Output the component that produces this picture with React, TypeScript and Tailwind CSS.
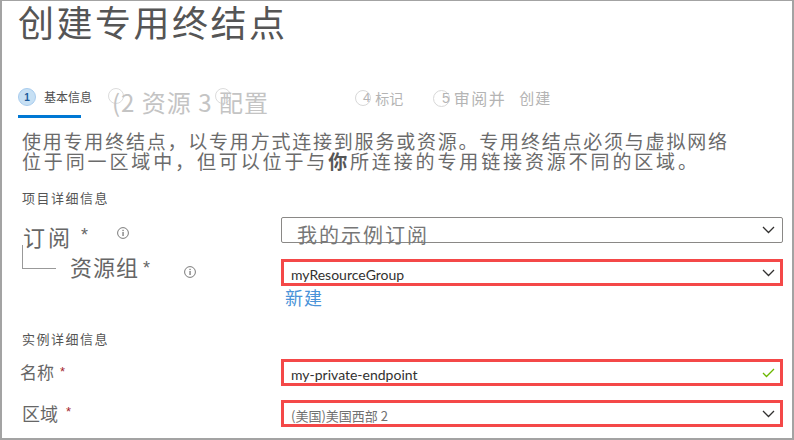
import React from 'react';

const cjk = '[font-family:"Noto_Sans_CJK_SC","Noto_Sans",sans-serif]';

function InfoIcon() {
  return (
    <svg width="12" height="12" viewBox="0 0 12 12" className="shrink-0">
      <circle cx="6" cy="6" r="5.4" fill="none" stroke="#7a7a7a" strokeWidth="1" />
      <rect x="5.4" y="5" width="1.3" height="4" fill="#7a7a7a" />
      <rect x="5.4" y="2.8" width="1.3" height="1.3" fill="#7a7a7a" />
    </svg>
  );
}

function Chevron() {
  return (
    <svg width="13" height="8" viewBox="0 0 13 8" className="shrink-0">
      <polyline points="1,1 6.5,6.5 12,1" fill="none" stroke="#323130" strokeWidth="1.3" />
    </svg>
  );
}

function Check() {
  return (
    <svg width="13" height="10" viewBox="0 0 13 10" className="shrink-0">
      <polyline points="1,5 4.5,8.5 12,1" fill="none" stroke="#6bb700" strokeWidth="1.3" />
    </svg>
  );
}

function RedBox({ children, right }: { children: React.ReactNode; right: React.ReactNode }) {
  return (
    <div className="w-[502px] h-[27px] border-[3px] border-[#f44848] flex items-center pl-[7px] pr-[5px]">
      <div className="flex-1 truncate">{children}</div>
      {right}
    </div>
  );
}

export default function App() {
  return (
    <div className={`w-[794px] h-[440px] bg-white border-l-2 border-r-2 border-t border-b-2 border-[#a3a3a3] overflow-hidden pl-[16px] ${cjk}`}>
      {/* title */}
      <div className="text-[36px] leading-[40px] tracking-[2.5px] text-[#555]">创建专用终结点</div>

      {/* steps */}
      <div className="mt-[46px] h-[31px] flex items-start">
        <div className="w-[90px] shrink-0 flex flex-col">
          <div className="h-[20px] flex items-center">
            <span className="w-[18px] h-[18px] rounded-full bg-[#c7e0f4] border border-[#a8ccee] flex items-center justify-center text-[10px] font-bold text-[#1b5a9a] [font-family:Arial,sans-serif]">1</span>
            <span className="ml-[8px] text-[12px] text-[#505050]">基本信息</span>
          </div>
          <div className="mt-[8px] w-[63px] h-[3px] bg-[#0078d4]" />
        </div>
        <div className="w-[247px] shrink-0 relative mt-[3px]">
          <span className="absolute left-0 top-[-2px] w-[16px] h-[16px] rounded-full border border-[#dcdcdc]" />
          <span className="absolute left-[107px] top-[-2px] w-[16px] h-[16px] rounded-full border border-[#dcdcdc]" />
          <div className="relative pl-[4px] text-[24px] leading-[24px] tracking-[1px] text-[#c4c4c4]">(2 资源 3 配置</div>
        </div>
        <div className="w-[78px] shrink-0 h-[20px] mt-[1px] flex items-center text-[#b4b4b4]">
          <span className="w-[16px] h-[16px] rounded-full border border-[#d8d8d8] shrink-0" />
          <span className="-ml-[8px] text-[13px] [font-family:Arial,sans-serif]">4</span>
          <span className="ml-[5px] text-[14px]">标记</span>
        </div>
        <div className="h-[20px] mt-[1px] flex items-center text-[#b4b4b4]">
          <span className="w-[17px] h-[17px] rounded-full border border-[#d8d8d8] shrink-0" />
          <span className="-ml-[8px] text-[14px] [font-family:Arial,sans-serif]">5</span>
          <span className="ml-[4px] text-[16px] tracking-[1.5px]">审阅并</span>
          <span className="ml-[13px] text-[15px] tracking-[1px]">创建</span>
        </div>
      </div>

      {/* description */}
      <div className="ml-[4px] mt-[13px] text-[19px] leading-[20px] text-[#6b6b6b]">
        <div className="w-[705px] text-justify [text-align-last:justify]">使用专用终结点，以专用方式连接到服务或资源。专用终结点必须与虚拟网络</div>
        <div className="w-[675px] text-justify [text-align-last:justify]">位于同一区域中，但可以位于与<span className="font-bold text-[#555]">你</span>所连接的专用链接资源不同的区域。</div>
      </div>

      <div className="ml-[4px] mt-[17px] text-[13px] leading-[20px] tracking-[1.5px] text-[#555]">项目详细信息</div>

      {/* subscription */}
      <div className="mt-[9px] h-[26px] flex items-start">
        <div className="w-[263px] shrink-0 flex items-start text-[#666]">
          <span className="ml-[5px] mt-[6px] text-[22px] leading-[26px] tracking-[3px]">订阅</span>
          <span className="ml-[8px] mt-[9px] text-[18px] leading-[18px] [font-family:Arial,sans-serif]">*</span>
          <span className="ml-[29px] mt-[10px]"><InfoIcon /></span>
        </div>
        <div className="w-[502px] h-[26px] border border-[#8a8886] rounded-[2px] flex items-center pl-[15px] pr-[7px]">
          <span className="flex-1 relative top-[5px] text-[20px] leading-[26px] tracking-[2px] text-[#777]">我的示例订阅</span>
          <Chevron />
        </div>
      </div>

      {/* resource group */}
      <div className="mt-[16px] flex items-start">
        <div className="w-[263px] shrink-0 flex items-start text-[#666]">
          <div className="ml-[4px] -mt-[14px] w-[34px] h-[24px] shrink-0 border-l border-b border-[#999]" />
          <span className="ml-[14px] -mt-[6px] text-[22px] leading-[26px] tracking-[1px]">资源组</span>
          <span className="ml-[4px] mt-[0px] text-[18px] leading-[18px] [font-family:Arial,sans-serif]">*</span>
          <span className="ml-[34px] mt-[7px]"><InfoIcon /></span>
        </div>
        <div className="flex flex-col">
          <RedBox right={<Chevron />}>
            <span className="text-[14px] text-[#323130] [font-family:Lato,sans-serif]">myResourceGroup</span>
          </RedBox>
          <span className="ml-[4px] mt-[1px] text-[18px] leading-[20px] tracking-[1px] text-[#4a93d8]">新建</span>
        </div>
      </div>

      <div className="ml-[4px] mt-[22px] text-[13px] leading-[20px] tracking-[1.5px] text-[#555]">实例详细信息</div>

      {/* name */}
      <div className="mt-[10px] flex items-start">
        <div className="w-[263px] shrink-0 flex items-start text-[#666]">
          <span className="ml-[2px] text-[17px] leading-[26px]">名称</span>
          <span className="ml-[6px] mt-[6px] text-[13px] leading-[13px] text-[#a4262c] [font-family:Arial,sans-serif]">*</span>
        </div>
        <RedBox right={<Check />}>
          <span className="text-[14px] text-[#323130] [font-family:Lato,sans-serif]">my-private-endpoint</span>
        </RedBox>
      </div>

      {/* region */}
      <div className="mt-[14px] flex items-start">
        <div className="w-[263px] shrink-0 flex items-start text-[#666]">
          <span className="ml-[4px] text-[18px] leading-[26px]">区域</span>
          <span className="ml-[8px] mt-[5px] text-[13px] leading-[13px] text-[#a4262c] [font-family:Arial,sans-serif]">*</span>
        </div>
        <RedBox right={<Chevron />}>
          <span className="text-[13px] text-[#707070]">(美国)美国西部 2</span>
        </RedBox>
      </div>
    </div>
  );
}
